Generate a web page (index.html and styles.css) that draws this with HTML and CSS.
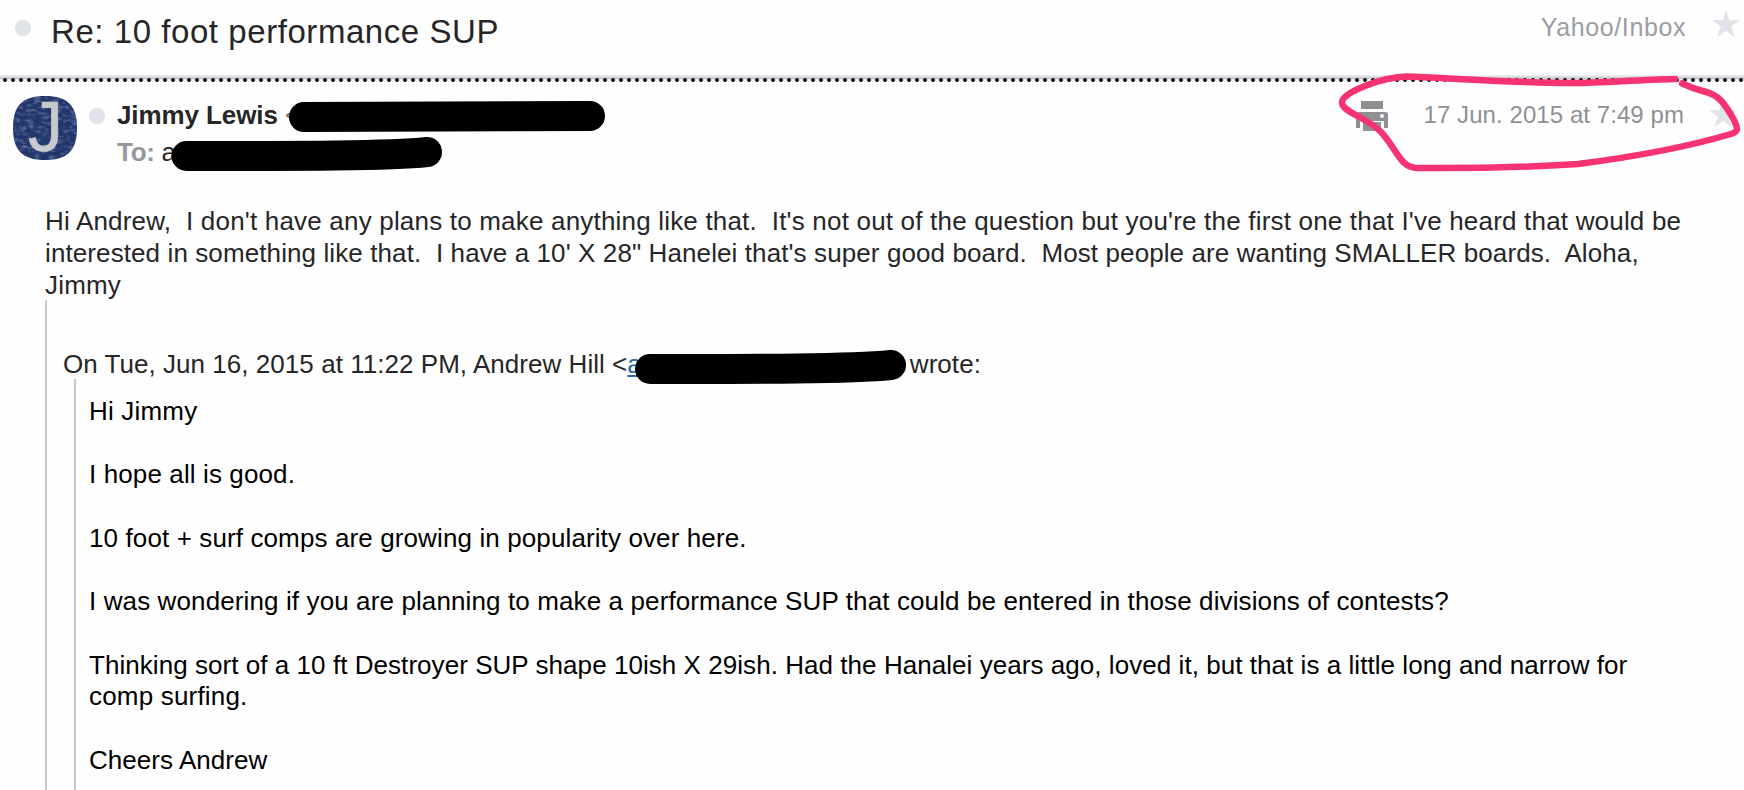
FILE: index.html
```
<!DOCTYPE html>
<html lang="en">
<head>
    <meta charset="UTF-8">
    <title>Re: 10 foot performance SUP</title>
    <link rel="stylesheet" href="styles.css">
</head>
<body>
    <header class="subject-bar">
        <span class="dot"></span>
        <h1 class="subject">Re: 10 foot performance SUP</h1>
        <span class="folder">Yahoo/Inbox</span>
        <svg class="star" viewBox="0 0 28 28"><path d="M14 0l3.4 10.2H28l-8.6 6.4 3.3 10.6L14 20.8l-8.7 6.4 3.3-10.6L0 10.2h10.6z"/></svg>
    </header>
    <div class="divider"></div>

    <section class="message-head">
        <div class="avatar">
            <svg class="avatar-skin" viewBox="0 0 64 64">
                <defs>
                    <filter id="leather" x="0" y="0" width="100%" height="100%">
                        <feTurbulence type="fractalNoise" baseFrequency="0.14 0.3" numOctaves="3" seed="4"/>
                        <feColorMatrix values="0 0 0 0 0.4  0 0 0 0 0.5  0 0 0 0 0.7  1.1 0 0 0 -0.5"/>
                    </filter>
                    <clipPath id="round"><path d="M32 0C55 0 64 10 64 32S55 64 32 64 0 54 0 32 9 0 32 0z"/></clipPath>
                </defs>
                <g clip-path="url(#round)">
                    <rect width="64" height="64" fill="#22366c"/>
                    <rect width="64" height="64" filter="url(#leather)"/>
                </g>
            </svg>
            <span class="avatar-letter">J</span>
        </div>
        <span class="dot"></span>
        <div class="people">
            <div class="sender"><b>Jimmy Lewis</b> <span class="address">&lt;</span></div>
            <div class="recipient"><b>To:</b> a</div>
        </div>
        <svg class="printer" viewBox="0 0 32 30">
            <path d="M5 0h22v8H5zM3 11h26a3 3 0 0 1 3 3v13h-4v-7H4v7H0V14a3 3 0 0 1 3-3z"/>
            <path d="M7 21h18v9H7z"/>
            <circle cx="26" cy="15" r="2" fill="#fff"/>
        </svg>
        <time class="date">17 Jun. 2015 at 7:49 pm</time>
        <svg class="star" viewBox="0 0 28 28"><path d="M14 0l3.4 10.2H28l-8.6 6.4 3.3 10.6L14 20.8l-8.7 6.4 3.3-10.6L0 10.2h10.6z"/></svg>
    </section>

    <main class="message-body">
        <p class="reply"><span class="wide">Hi Andrew,&nbsp; I don't have any plans to make anything like that.&nbsp; It's not out of the question but you're the first one that I've heard that would be</span><br>interested in something like that.&nbsp; I have a 10' X 28" Hanelei that's super good board.&nbsp; Most people are wanting SMALLER boards.&nbsp; Aloha,<br><span class="wide">Jimmy</span></p>
        <blockquote class="quote">
            <p class="quote-intro"><span>On Tue, Jun 16, 2015 at 11:22 PM, Andrew Hill &lt;<a class="mail">a</a></span><span>wrote:</span></p>
            <blockquote class="quote-inner">
                <p class="wide">Hi Jimmy</p>
                <p>I hope all is good.</p>
                <p>10 foot + surf comps are growing in popularity over here.</p>
                <p>I was wondering if you are planning to make a performance SUP that could be entered in those divisions of contests?</p>
                <p><span class="tight">Thinking sort of a 10 ft Destroyer SUP shape 10ish X 29ish. Had the Hanalei years ago, loved it, but that is a little long and narrow for</span><br><span class="wide">comp surfing.</span></p>
                <p class="tight">Cheers Andrew</p>
            </blockquote>
        </blockquote>
    </main>

    <!-- marker strokes drawn over the mail -->
    <svg class="marks" viewBox="0 0 1744 790">
        <g class="redact">
            <path d="M304 117L590 116"/>
            <path d="M186.500 156C300 156 390 156 427 152"/>
            <path d="M650 369C760 369 850 369 891 365"/>
        </g>
        <path class="circled" d="M1675 79C1640 80 1600 82.500 1575 83C1500 83 1440 77 1407 76.500C1382 77 1343 92 1342 102C1341 112 1367 117 1381 132C1397 149 1400 168 1417 168C1470 168.500 1530 167 1578 164C1625 158 1680 149 1731 134C1740 131 1737 127 1734 120C1724 102 1718 95 1706 92Q1694 89 1682 83.500"/>
    </svg>
</body>
</html>
```
FILE: styles.css
```
* {
    box-sizing: border-box;
}

body {
    margin: 0;
    height: 790px;
    position: relative;
    overflow: hidden;
    background: #fefefe;
    color: #262628;
    font-family: "Liberation Sans", Arial, sans-serif;
    font-size: 26px;
    line-height: 32px;
    white-space: nowrap;
}

p,
h1,
blockquote {
    margin: 0;
}

.dot {
    width: 16px;
    height: 16px;
    border-radius: 50%;
    background: #e0e3e8;
    flex: none;
}

.star {
    width: 28px;
    height: 28px;
    fill: #e0e3e8;
    flex: none;
}

/* subject line */
.subject-bar {
    display: flex;
    align-items: flex-start;
    height: 75px;
    padding: 10px 4px 0 15px;
}

.subject-bar .dot {
    margin-top: 10px;
}

.subject {
    margin-left: 20px;
    font-size: 33px;
    line-height: 44px;
    font-weight: normal;
    letter-spacing: 0.56px;
}

.folder {
    margin-left: auto;
    color: #9c9ca4;
    font-size: 25px;
    line-height: 34px;
    letter-spacing: 0.6px;
}

.subject-bar .star {
    margin-left: 26px;
}

.divider {
    height: 8px;
    background: radial-gradient(circle at 5px 5px, #1b1b22 1.6px, transparent 2.3px) 0 0 / 8px 8px,
        linear-gradient(#f6f6f8, #c8c8d0 3px, #d4d4da 4px, transparent 5px);
}

/* sender row */
.message-head {
    display: flex;
    align-items: flex-start;
    height: 122px;
    padding: 13px 7px 0 13px;
}

.avatar {
    position: relative;
    width: 64px;
    height: 64px;
    flex: none;
}

.avatar-skin {
    display: block;
}

.avatar-letter {
    position: absolute;
    left: 15px;
    top: -7px;
    color: #c8c9cc;
    font-size: 70px;
    line-height: 77px;
    -webkit-text-stroke: 0.6px #c8c9cc;
}

.message-head .dot {
    margin: 12px 0 0 12px;
}

.people {
    margin-left: 12px;
    padding-top: 3px;
    letter-spacing: -0.1px;
}

.recipient {
    margin-top: 5px;
    letter-spacing: -0.3px;
}

.recipient b {
    color: #96989d;
}

.address {
    color: #77797e;
}

.printer {
    width: 32px;
    height: 30px;
    margin: 5px 0 0 auto;
    fill: #8e9094;
    flex: none;
}

.date {
    margin: 3px 0 0 36px;
    color: #8e9094;
    font-size: 24px;
    letter-spacing: 0.07px;
}

.message-head .star {
    margin: 4px 0 0 25px;
}

/* mail text */
.message-body {
    padding-left: 45px;
}

.reply {
    letter-spacing: 0.1px;
}

.wide {
    letter-spacing: 0.19px;
}

.tight {
    letter-spacing: 0.05px;
}

.quote {
    height: 490px;
    margin-top: -1px;
    padding: 48px 0 0 16px;
    border-left: 2px solid #c8c8c8;
}

.quote-intro {
    display: flex;
    gap: 268px;
    letter-spacing: 0.04px;
}

.mail {
    color: #2a67a5;
    text-decoration: underline;
}

.quote-inner {
    height: 420px;
    margin: -1px 0 0 11px;
    padding: 17px 0 0 13px;
    border-left: 2px solid #c8c8c8;
    color: #000;
    line-height: 31.7px;
    letter-spacing: 0.115px;
}

.quote-inner p + p {
    margin-top: 31.7px;
}

/* overlay */
.marks {
    position: absolute;
    left: 0;
    top: 0;
    width: 1744px;
    height: 790px;
    fill: none;
    stroke-linecap: round;
}

.redact {
    stroke: #000;
    stroke-width: 30;
}

.circled {
    stroke: #f73372;
    stroke-width: 6.5;
}
```
